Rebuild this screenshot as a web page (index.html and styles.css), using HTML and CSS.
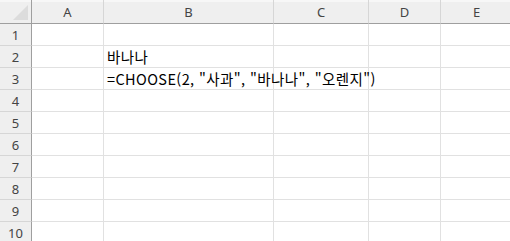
FILE: index.html
```html
<!DOCTYPE html>
<html lang="ko">
<head>
<meta charset="utf-8">
<link rel="stylesheet" href="styles.css">
</head>
<body>
<div class="sheet">
  <div class="hdr corner"><span class="tri"></span></div>
  <div class="hdr col">A</div>
  <div class="hdr col">B</div>
  <div class="hdr col">C</div>
  <div class="hdr col">D</div>
  <div class="hdr col">E</div>

  <div class="rh">1</div><div class="c"></div><div class="c"></div><div class="c"></div><div class="c"></div><div class="c"></div>
  <div class="rh">2</div><div class="c"></div><div class="c">바나나</div><div class="c"></div><div class="c"></div><div class="c"></div>
  <div class="rh">3</div><div class="c"></div><div class="c over">=CHOOSE(2, "사과", "바나나", "오렌지")</div><div class="c"></div><div class="c"></div><div class="c"></div>
  <div class="rh">4</div><div class="c"></div><div class="c"></div><div class="c"></div><div class="c"></div><div class="c"></div>
  <div class="rh">5</div><div class="c"></div><div class="c"></div><div class="c"></div><div class="c"></div><div class="c"></div>
  <div class="rh">6</div><div class="c"></div><div class="c"></div><div class="c"></div><div class="c"></div><div class="c"></div>
  <div class="rh">7</div><div class="c"></div><div class="c"></div><div class="c"></div><div class="c"></div><div class="c"></div>
  <div class="rh">8</div><div class="c"></div><div class="c"></div><div class="c"></div><div class="c"></div><div class="c"></div>
  <div class="rh">9</div><div class="c"></div><div class="c"></div><div class="c"></div><div class="c"></div><div class="c"></div>
  <div class="rh">10</div><div class="c"></div><div class="c"></div><div class="c"></div><div class="c"></div><div class="c"></div>
</div>
</body>
</html>
```
FILE: styles.css
```css
html, body {
  margin: 0;
  padding: 0;
  background: #ffffff;
  overflow: hidden;
}
.sheet {
  display: grid;
  grid-template-columns: 32px 72px 170px 95px 72px 72px;
  grid-template-rows: 24px repeat(10, 22px);
  width: 533px;
  font-family: "Noto Sans", "Liberation Sans", sans-serif;
}
.hdr {
  background: #efefef;
  border-bottom: 1px solid #9f9f9f;
  border-right: 1px solid #d6d6d6;
  color: #444444;
  font-size: 13px;
  display: flex;
  align-items: center;
  justify-content: center;
  box-sizing: border-box;
  padding-top: 1px;
  box-shadow: inset 0 2px 0 #f7f7f7;
}
.corner {
  position: relative;
  border-right: 1px solid #9f9f9f;
}
.tri {
  position: absolute;
  right: 3px;
  bottom: 3px;
  width: 0;
  height: 0;
  border-left: 15px solid transparent;
  border-bottom: 15px solid #dcdcdc;
}
.rh {
  background: #efefef;
  border-right: 1px solid #9f9f9f;
  border-bottom: 1px solid #d6d6d6;
  color: #444444;
  font-size: 13px;
  display: flex;
  align-items: center;
  justify-content: center;
  box-sizing: border-box;
  padding-top: 1px;
}
.c {
  border-right: 1px solid #e1e1e1;
  border-bottom: 1px solid #e1e1e1;
  box-sizing: border-box;
  font-family: "Noto Sans CJK KR", "Noto Sans", sans-serif;
  font-size: 14.5px;
  letter-spacing: 0.4px;
  color: #000000;
  padding: 0 3px;
  display: flex;
  align-items: flex-end;
  line-height: 20px;
  white-space: nowrap;
}
.over {
  overflow: visible;
  position: relative;
  z-index: 1;
}
```
